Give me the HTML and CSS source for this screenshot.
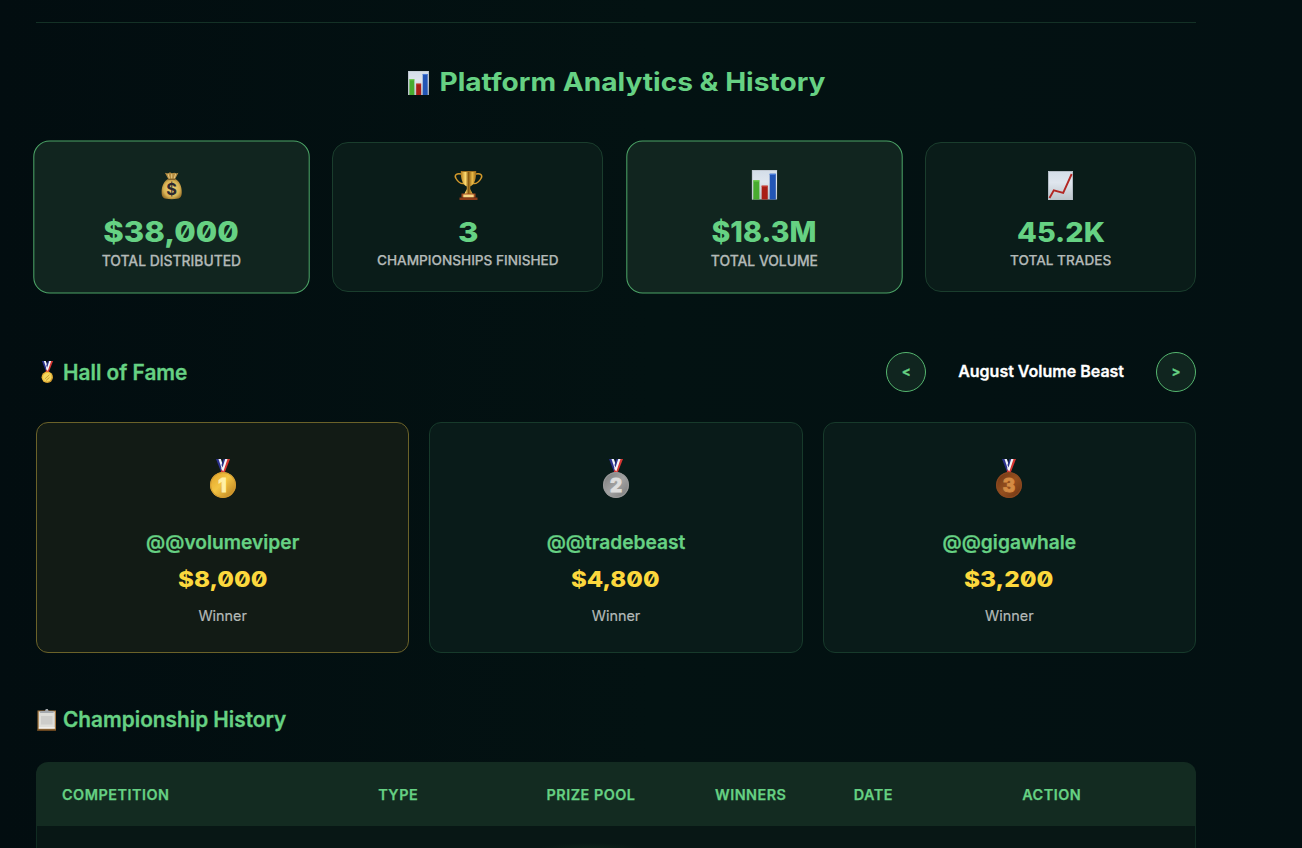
FILE: index.html
```html
<!DOCTYPE html>
<html lang="en">
<head>
<meta charset="utf-8">
<title>Platform Analytics &amp; History</title>
<link rel="stylesheet" href="styles.css">
</head>
<body>
<svg class="defs" aria-hidden="true">
  <defs>
    <linearGradient id="gold" x1="0" y1="0" x2="1" y2="1"><stop offset="0" stop-color="#e0a127"/><stop offset=".45" stop-color="#f3c443"/><stop offset="1" stop-color="#b67a1c"/></linearGradient>
    <linearGradient id="silver" x1="0" y1="0" x2="1" y2="1"><stop offset="0" stop-color="#777"/><stop offset=".5" stop-color="#a3a3a3"/><stop offset="1" stop-color="#777"/></linearGradient>
    <linearGradient id="bronze" x1="0" y1="0" x2="1" y2="1"><stop offset="0" stop-color="#6c3212"/><stop offset=".5" stop-color="#96501f"/><stop offset="1" stop-color="#6c3212"/></linearGradient>
    <linearGradient id="cup" x1="0" x2="1"><stop offset="0" stop-color="#b37a1b"/><stop offset=".3" stop-color="#ffdc70"/><stop offset=".5" stop-color="#8a5a12"/><stop offset=".75" stop-color="#e8b945"/><stop offset="1" stop-color="#9a6616"/></linearGradient>
    <linearGradient id="paper" x1="0" y1="0" x2="0" y2="1"><stop offset="0" stop-color="#d3dde8"/><stop offset=".4" stop-color="#dfe6ee"/><stop offset="1" stop-color="#bcc4ca"/></linearGradient>
    <radialGradient id="bagfill" cx=".5" cy=".5" r=".6"><stop offset="0" stop-color="#f2d678"/><stop offset=".65" stop-color="#d8b354"/><stop offset="1" stop-color="#8b6422"/></radialGradient>
    <symbol id="bars" viewBox="0 0 25 29">
      <rect width="25" height="29" fill="url(#paper)"/>
      <path d="M0 .5h25M.5 0v29" stroke="#c2c9d2" fill="none"/>
      <rect x="1.5" y="10" width="6" height="19" fill="#48ab2f"/><rect x="1.5" y="10" width="6" height="1.2" fill="#72d14f"/>
      <rect x="9.7" y="15.3" width="6" height="13.7" fill="#a91e17"/><rect x="9.7" y="15.3" width="6" height="1" fill="#cf443a"/>
      <rect x="17.6" y="3.6" width="6" height="25.4" fill="#2255b5"/><rect x="17.6" y="3.6" width="6" height="1.2" fill="#4b7edb"/>
    </symbol>
    <symbol id="ribbon" viewBox="0 0 16 15">
      <path d="M1 0h5l4.500 14H6.500z" fill="#2b318e"/><path d="M3.500 0h2.300l4 12H7.500z" fill="#f2f4f8"/>
      <path d="M10 0h5L9.500 14h-4z" fill="#d63632"/><path d="M9.500 0h3L8.300 12.500 6.300 10z" fill="#f4f4f6"/>
      <path d="M8.500 0h1.700L7.500 8.500l-1-2.500z" fill="#2b318e"/>
    </symbol>
  </defs>
</svg>
<main class="page">
  <h2 class="title">
    <svg class="title-icon"><use href="#bars"/></svg>
    <svg class="wide title-text" width="386" height="32"><text x="0.500" y="24" textLength="386" lengthAdjust="spacingAndGlyphs">Platform Analytics &amp; History</text></svg>
  </h2>

  <section class="stats">
    <article class="stat stat-featured">
      <svg class="stat-icon" viewBox="0 0 32 32">
        <g transform="translate(.7 1.500)">
        <path d="M9.300 3l3 .8 2-1.100 1.800.8L18.600 3l1.800.8L22.600 3l-3.500 6.800h-6.200z" fill="#b48b3f"/>
        <path d="M12.300 4l1.700 5.500M16 4v5M20 4l-1.700 5" stroke="#e3c681" fill="none"/>
        <path d="M12.800 9h6.300c4.800 2.400 6.800 7.300 6.800 13.200 0 5.300-1.600 6.800-9.900 6.800s-9.900-1.500-9.900-6.800c0-5.900 2-10.800 6.700-13.200z" fill="url(#bagfill)"/>
        <path d="M12.500 9.500h7" stroke="#735323" stroke-width="1.200"/>
        <text x="16" y="25" class="bag-sign">$</text>
        </g>
      </svg>
      <svg class="wide stat-value" width="134" height="32"><text x="0.500" y="24.500" textLength="133" lengthAdjust="spacingAndGlyphs">$38,000</text></svg>
      <p class="stat-label">Total Distributed</p>
    </article>
    <article class="stat">
      <svg class="stat-icon" viewBox="0 0 32 32">
        <path d="M9.500 5C4.500 3.800 2 6 4 9.500s5 5.500 8 5M23.500 5c5-1.200 7.500 1 5.500 4.500s-5 5.500-8 5" fill="none" stroke="#d49a2c" stroke-width="1.500"/>
        <path d="M8.800 2h15.400c.2 7-1.200 13.300-6 15.500v2.500l2.500 5h-8.400l2.500-5v-2.500C10 15.300 8.600 9 8.800 2z" fill="url(#cup)"/>
        <path d="M9.500 2.500h14" stroke="#a06f1e"/><path d="M9.500 24.500h14v4h-14z" fill="#a34c20"/><path d="M11.300 25.500h10.400v3H11.300z" fill="#f8d886"/><path d="M7.500 28.500h18V31h-18z" fill="#8c3b18"/>
      </svg>
      <svg class="wide stat-value" width="20" height="32"><text x="0" y="24.500" textLength="20.500" lengthAdjust="spacingAndGlyphs">3</text></svg>
      <p class="stat-label">Championships Finished</p>
    </article>
    <article class="stat stat-featured">
      <svg class="stat-icon stat-bars"><use href="#bars"/></svg>
      <svg class="wide stat-value" width="104" height="32"><text x="0.500" y="24.500" textLength="103" lengthAdjust="spacingAndGlyphs">$18.3M</text></svg>
      <p class="stat-label">Total Volume</p>
    </article>
    <article class="stat">
      <svg class="stat-icon" viewBox="0 0 32 32">
        <rect x="3" y="2" width="25" height="29" fill="url(#paper)"/><path d="M3.500 31V2.500h24V31" fill="none" stroke="#b4bcc5"/>
        <path d="M4.500 29l4.300-7.600 9.400 2.500L26.700 5" fill="none" stroke="#b22723" stroke-width="1.900"/>
      </svg>
      <svg class="wide stat-value" width="88" height="32"><text x="0" y="24.500" textLength="88" lengthAdjust="spacingAndGlyphs">45.2K</text></svg>
      <p class="stat-label">Total Trades</p>
    </article>
  </section>

  <header class="hall-head">
    <h3 class="subtitle">
      <svg class="sub-icon" viewBox="0 0 22 24">
        <use href="#ribbon" x="5" y="0" width="13" height="12"/>
        <circle cx="11.300" cy="16.200" r="5.700" fill="url(#gold)"/><circle cx="11.300" cy="16.200" r="4.200" fill="#f5d75e"/>
        <path d="M8.800 18l4.600-4.200M10 19.500l3.500-3" stroke="#c99a31" stroke-width=".9"/>
      </svg>
      Hall of Fame
    </h3>
    <nav class="pager">
      <button class="pager-btn">&lt;</button>
      <span class="pager-name">August Volume Beast</span>
      <button class="pager-btn">&gt;</button>
    </nav>
  </header>

  <section class="winners">
    <article class="winner winner-first">
      <svg class="medal" viewBox="0 0 30 42"><use href="#ribbon" x="7" y="1" width="16" height="15"/><circle cx="15" cy="27" r="13" fill="url(#gold)"/><circle cx="15" cy="27" r="12.400" fill="none" stroke="#d39b31"/><text x="14.500" y="34" class="medal-num" fill="#fff0a5" stroke="#fff0a5">1</text></svg>
      <h4 class="winner-name">@@volumeviper</h4>
      <svg class="wide prize" width="90" height="28"><text x="0" y="20" textLength="89.500" lengthAdjust="spacingAndGlyphs">$8,000</text></svg>
      <p class="winner-role">Winner</p>
    </article>
    <article class="winner">
      <svg class="medal" viewBox="0 0 30 42"><use href="#ribbon" x="7" y="1" width="16" height="15"/><circle cx="15" cy="27" r="13" fill="url(#silver)"/><circle cx="15" cy="27" r="12.400" fill="none" stroke="#9b9b9b"/><text x="15" y="34" class="medal-num" fill="#dedede" stroke="#dedede">2</text></svg>
      <h4 class="winner-name">@@tradebeast</h4>
      <svg class="wide prize" width="90" height="28"><text x="0" y="20" textLength="88.500" lengthAdjust="spacingAndGlyphs">$4,800</text></svg>
      <p class="winner-role">Winner</p>
    </article>
    <article class="winner">
      <svg class="medal" viewBox="0 0 30 42"><use href="#ribbon" x="7" y="1" width="16" height="15"/><circle cx="15" cy="27" r="13" fill="url(#bronze)"/><circle cx="15" cy="27" r="12.400" fill="none" stroke="#8c4a22"/><text x="15" y="34" class="medal-num" fill="#d58b43" stroke="#d58b43">3</text></svg>
      <h4 class="winner-name">@@gigawhale</h4>
      <svg class="wide prize" width="90" height="28"><text x="0" y="20" textLength="89.500" lengthAdjust="spacingAndGlyphs">$3,200</text></svg>
      <p class="winner-role">Winner</p>
    </article>
  </section>

  <h3 class="subtitle history-title">
    <svg class="sub-icon" viewBox="0 0 22 24">
      <path d="M1.500 2.500h18.500V23H1.500z" fill="#a47842"/><path d="M1.500 21.500h18.500V23H1.500z" fill="#65441f"/>
      <path d="M2.800 3.500h16v17h-16z" fill="#deded9"/><path d="M5 8h11.500v8.500H5z" fill="#cdcdca"/>
      <path d="M4.500 3h4.500l.8-2h2l.8 2H17l.8 2H3.800z" fill="#a5a9ad"/><path d="M2.800 19.500h16v1h-16z" fill="#fff"/>
    </svg>
    Championship History
  </h3>

  <section class="table">
    <div class="table-head">
      <span>Competition</span><span>Type</span><span>Prize Pool</span><span>Winners</span><span>Date</span><span>Action</span>
    </div>
    <div class="table-row"></div>
  </section>
</main>
</body>
</html>
```

FILE: styles.css
```css
* { box-sizing: border-box; }
body {
  margin: 0;
  height: 848px;
  overflow: hidden;
  background: linear-gradient(90deg, #020d10 0, #031212 50%, #031012 100%);
  color: #66d183;
  font-family: Inter, "Liberation Sans", sans-serif;
}
h2, h3, h4, p { margin: 0; }
svg { display: block; flex: none; }
.defs { position: absolute; width: 0; height: 0; }
.page { width: 1160px; margin: 22px 0 0 36px; border-top: 1px solid #143126; }
.wide {
  overflow: visible;
  fill: #66d183;
  font-family: Inter, sans-serif;
  font-weight: 800;
  font-feature-settings: "zero" 1;
}

.title { display: flex; justify-content: center; align-items: center; gap: 10px; padding: 44px 0 0 1px; height: 76px; }
.title-icon { width: 21px; height: 24px; margin-top: -1px; }
.title-text { font-size: 25.500px; font-weight: 700; }

.stats { display: grid; grid-template-columns: repeat(4, 1fr); gap: 25.600px; margin-top: 43px; }
.stat {
  display: flex; flex-direction: column; align-items: center;
  height: 150px; padding-top: 26px;
  border: 1px solid #1a3d2d; border-radius: 16px; background: #0a1c19;
}
.stat-featured { transform: scale(1.02); border-color: #4ca467; background: #11251f; }
.stat-icon { width: 32px; height: 32px; }
.stat-bars { width: 25px; height: 29px; margin: 2px 0 1px; }
.bag-sign { font-size: 16px; font-weight: 700; text-anchor: middle; fill: #2d2930; }
.stat-value { margin-top: 16px; font-size: 27.500px; }
.stat-label {
  margin-top: 1px; font-size: 13.600px; line-height: 20px; font-weight: 500;
  text-transform: uppercase; color: #b3b9b7; -webkit-text-stroke: .25px;
}

.hall-head { display: flex; justify-content: space-between; align-items: center; margin-top: 60px; height: 40px; }
.subtitle {
  display: flex; align-items: center; gap: 5px; padding-top: 1px;
  font-size: 20.800px; line-height: 28px; font-weight: 600; -webkit-text-stroke: .3px;
}
.sub-icon { width: 22px; height: 24px; -webkit-text-stroke: 0; }
.pager { display: flex; align-items: center; gap: 32px; }
.pager-btn {
  width: 40px; height: 40px; padding: 0 0 2px; border: 1px solid #55b66f; border-radius: 50%;
  background: #10251f; color: #66d183; font: 700 13.300px Inter, sans-serif; -webkit-text-stroke: .3px;
}
.pager-name { padding-bottom: 2px; font-size: 16px; font-weight: 600; color: #fff; -webkit-text-stroke: .3px; }

.winners { display: grid; grid-template-columns: repeat(3, 1fr); gap: 20px; margin-top: 30px; }
.winner {
  display: flex; flex-direction: column; align-items: center;
  height: 231px; padding-top: 35px;
  border: 1px solid #173a2b; border-radius: 12px; background: #091b19;
}
.winner-first { border-color: #6b6229; background: #121b15; }
.medal { width: 30px; height: 42px; }
.medal-num { font-size: 19px; font-weight: 800; text-anchor: middle; stroke-width: .9px; }
.winner-name { margin-top: 28px; font-size: 19.200px; line-height: 28px; font-weight: 600; -webkit-text-stroke: .25px; }
.prize { margin-top: 11px; font-size: 21.500px; fill: #fcd83d; }
.winner-role { margin-top: 10px; font-size: 14.400px; line-height: 22px; color: #b3b9b7; -webkit-text-stroke: .2px; }

.history-title { margin-top: 52px; }
.table { margin-top: 28px; border-radius: 12px 12px 0 0; overflow: hidden; }
.table-head {
  display: grid; grid-template-columns: 2fr 1fr 1fr .8fr 1fr 1fr; gap: 20.600px; align-items: center;
  height: 64px; padding: 0 26px; background: #132b21;
  font-size: 14.400px; font-weight: 600; letter-spacing: .5px; text-transform: uppercase; -webkit-text-stroke: .25px;
}
.table-row {
  height: 23px; border: 1px solid #102c22; border-width: 0 1px;
  background: radial-gradient(ellipse 54px 6px at 554px 23px, #0d2219, transparent), #081715;
}
```
